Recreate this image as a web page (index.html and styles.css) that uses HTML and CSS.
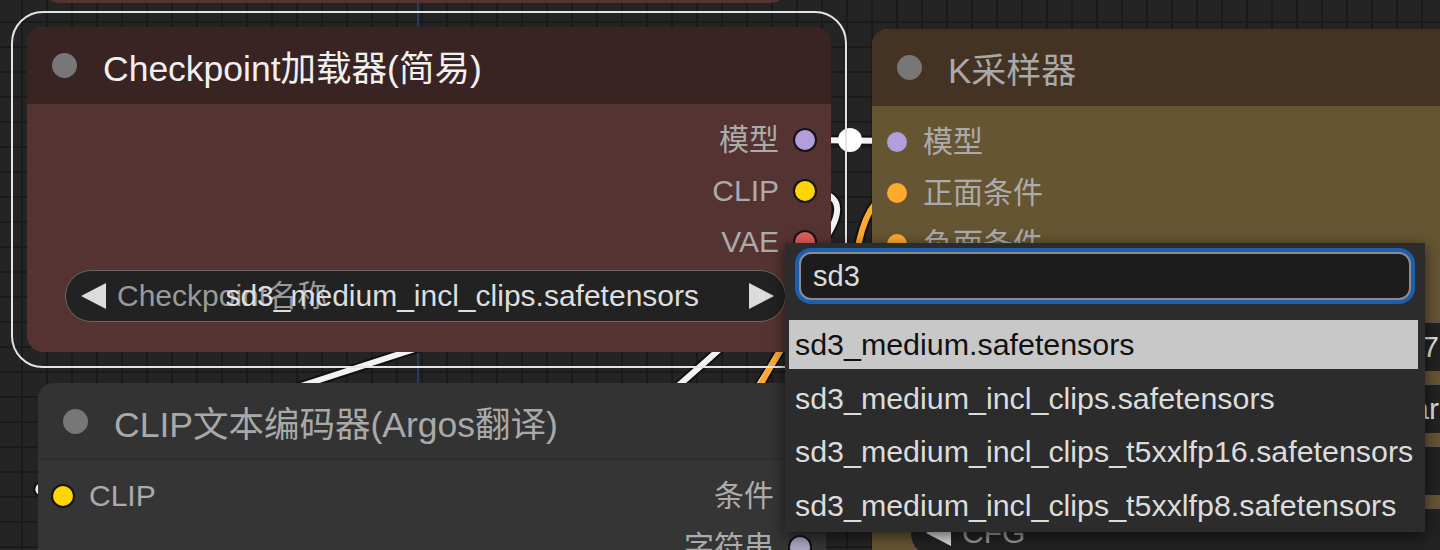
FILE: index.html
```html
<!DOCTYPE html>
<html lang="zh-CN">
<head>
    <meta charset="UTF-8">
    <title>ComfyUI - Checkpoint加载器</title>
    <link rel="stylesheet" href="styles.css">
</head>
<body>
    <!-- links are drawn under the nodes -->
    <svg class="links" width="1440" height="550" viewBox="0 0 1440 550">
        <line class="group-edge" x1="418" y1="0" x2="418" y2="550"/>
        <g class="wire-edge">
            <path d="M805 191 C1005 191 -138 495 62 495"/>
            <path d="M805 191 C1020 191 80 800 280 800"/>
            <path d="M805 242 C905 242 600 520 700 640"/>
            <path d="M700 560 C720 470 770 300 897 243"/>
            <path d="M800 497 C880 497 817 193 897 193"/>
            <path d="M805 140 L897 141"/>
        </g>
        <g class="wire wire-clip">
            <path d="M805 191 C1005 191 -138 495 62 495"/>
            <path d="M805 191 C1020 191 80 800 280 800"/>
            <path d="M805 242 C905 242 600 520 700 640"/>
        </g>
        <g class="wire wire-cond">
            <path d="M700 560 C720 470 770 300 897 243"/>
            <path d="M800 497 C880 497 817 193 897 193"/>
        </g>
        <g class="wire wire-model">
            <path d="M805 140 L897 141"/>
        </g>
        <circle class="link-knob" cx="850" cy="140" r="12"/>
    </svg>

    <div class="node node-ghost"></div>

    <div class="node node-ckpt selected">
        <div class="node-title"><span class="title-dot"></span><span>Checkpoint加载器(简易)</span></div>
        <div class="node-body">
            <div class="slot-row"><div class="slot out"><span>模型</span><i class="slot-dot model linked"></i></div></div>
            <div class="slot-row"><div class="slot out"><span>CLIP</span><i class="slot-dot clip linked"></i></div></div>
            <div class="slot-row"><div class="slot out"><span>VAE</span><i class="slot-dot vae linked"></i></div></div>
            <div class="combo">
                <svg class="arrow" viewBox="0 0 25 26"><path d="M25 0 V26 L0 13 Z"/></svg>
                <div class="combo-text">
                    <span class="combo-label">Checkpoint名称</span>
                    <span class="combo-value">sd3_medium_incl_clips.safetensors</span>
                </div>
                <svg class="arrow" viewBox="0 0 25 26"><path d="M0 0 V26 L25 13 Z"/></svg>
            </div>
        </div>
    </div>

    <div class="node node-ksampler">
        <div class="node-title"><span class="title-dot"></span><span>K采样器</span></div>
        <div class="node-body">
            <div class="slot-row"><div class="slot in"><i class="slot-dot model"></i><span>模型</span></div></div>
            <div class="slot-row"><div class="slot in"><i class="slot-dot cond"></i><span>正面条件</span></div></div>
            <div class="slot-row"><div class="slot in"><i class="slot-dot cond"></i><span>负面条件</span></div></div>
            <div class="slot-row"><div class="slot in"><i class="slot-dot latent"></i><span>Latent</span></div></div>
            <div class="widget-stack">
                <div class="combo">
                    <svg class="arrow" viewBox="0 0 25 26"><path d="M25 0 V26 L0 13 Z"/></svg>
                    <div class="combo-text"><span class="combo-label">随机种</span><span class="combo-value">7518</span></div>
                    <svg class="arrow" viewBox="0 0 25 26"><path d="M0 0 V26 L25 13 Z"/></svg>
                </div>
                <div class="combo">
                    <svg class="arrow" viewBox="0 0 25 26"><path d="M25 0 V26 L0 13 Z"/></svg>
                    <div class="combo-text"><span class="combo-label">运行后操作</span><span class="combo-value">karras&nbsp;</span></div>
                    <svg class="arrow" viewBox="0 0 25 26"><path d="M0 0 V26 L25 13 Z"/></svg>
                </div>
                <div class="combo">
                    <svg class="arrow" viewBox="0 0 25 26"><path d="M25 0 V26 L0 13 Z"/></svg>
                    <div class="combo-text"><span class="combo-label">步数</span><span class="combo-value">20</span></div>
                    <svg class="arrow" viewBox="0 0 25 26"><path d="M0 0 V26 L25 13 Z"/></svg>
                </div>
                <div class="combo">
                    <svg class="arrow" viewBox="0 0 25 26"><path d="M25 0 V26 L0 13 Z"/></svg>
                    <div class="combo-text"><span class="combo-label">CFG</span><span class="combo-value">8.0</span></div>
                    <svg class="arrow" viewBox="0 0 25 26"><path d="M0 0 V26 L25 13 Z"/></svg>
                </div>
            </div>
        </div>
    </div>

    <div class="node node-clip">
        <div class="node-title"><span class="title-dot"></span><span>CLIP文本编码器(Argos翻译)</span></div>
        <div class="node-body">
            <div class="slot-row">
                <div class="slot in"><i class="slot-dot clip linked"></i><span>CLIP</span></div>
                <div class="slot out"><span>条件</span><i class="slot-dot cond linked"></i></div>
            </div>
            <div class="slot-row">
                <div class="slot out"><span>字符串</span><i class="slot-dot string linked"></i></div>
            </div>
        </div>
    </div>

    <div class="menu">
        <div class="menu-filter">sd3</div>
        <div class="menu-item active">sd3_medium.safetensors</div>
        <div class="menu-item">sd3_medium_incl_clips.safetensors</div>
        <div class="menu-item">sd3_medium_incl_clips_t5xxlfp16.safetensors</div>
        <div class="menu-item">sd3_medium_incl_clips_t5xxlfp8.safetensors</div>
    </div>
</body>
</html>
```

FILE: styles.css
```css
body {
    margin: 0;
    width: 1440px;
    height: 550px;
    overflow: hidden;
    position: relative;
    font-family: "Liberation Sans", "Noto Sans CJK SC", sans-serif;
    background-color: #242424;
    background-image:
        linear-gradient(to right, #1a1a1a 2px, transparent 2px),
        linear-gradient(to bottom, #1a1a1a 2px, transparent 2px);
    background-size: 25px 25px;
    background-position: -4px -4px;
}

/* links */
.links {
    position: absolute;
    left: 0;
    top: 0;
}
.group-edge {
    stroke: #2a3a66;
    stroke-width: 2;
}
.wire-edge path {
    fill: none;
    stroke: #111;
    stroke-width: 10;
}
.wire path {
    fill: none;
    stroke-width: 6;
}
.wire-clip path, .wire-model path {
    stroke: #f2f2f2;
}
.wire-cond path {
    stroke: #ffa931;
}
.link-knob {
    fill: #fff;
}

/* nodes */
.node {
    position: absolute;
    border-radius: 16px;
    overflow: hidden;
}
.node-ghost {
    left: 43px;
    top: -100px;
    width: 744px;
    height: 103px;
    background: #553333;
}
.node-ckpt {
    left: 27px;
    top: 27px;
    width: 804px;
    height: 325px;
    background: #553333;
    overflow: visible;
}
.node-ckpt .node-title {
    background: #392323;
    border-radius: 16px 16px 0 0;
    font-size: 35.5px;
}
.node-ksampler {
    left: 872px;
    top: 29px;
    width: 749px;
    height: 600px;
    background: #665533;
}
.node-ksampler .node-title {
    background: #443322;
}
.node-clip {
    left: 38px;
    top: 383px;
    width: 788px;
    height: 300px;
    background: #353535;
}
.node-clip .node-title {
    background: #333333;
    border-bottom: 1px solid #2c2c2c;
    height: 76px;
    font-size: 35.5px;
}
.selected {
    outline: 2px solid #e4e4e4;
    outline-offset: 14px;
}

.node-title {
    height: 77px;
    display: flex;
    align-items: center;
    gap: 26px;
    padding-left: 25px;
    font-size: 35px;
    color: #a9a9a9;
    white-space: nowrap;
}
.selected .node-title {
    color: #f0f0f0;
}
.title-dot {
    width: 25px;
    height: 25px;
    border-radius: 50%;
    background: #777;
    flex: none;
}

.node-body {
    padding: 10px 16px 0 15px;
}
.slot-row {
    height: 51px;
    display: flex;
    align-items: center;
}
.slot {
    display: flex;
    align-items: center;
    gap: 16px;
    font-size: 30px;
    line-height: 34px;
    color: #ababab;
    white-space: nowrap;
}
.slot.out {
    margin-left: auto;
}
.slot-dot {
    width: 20px;
    height: 20px;
    border-radius: 50%;
    flex: none;
}
.slot-dot.linked {
    box-shadow: 0 0 0 2px #141414;
}
.slot-dot.model { background: #b39ddb; }
.slot-dot.clip { background: #ffd500; }
.slot-dot.vae { background: #e05c5c; }
.slot-dot.cond { background: #ffa931; }
.slot-dot.latent { background: #ff9cf9; }
.slot-dot.string { background: #a9a7c2; }

/* combo widgets */
.combo {
    height: 52px;
    box-sizing: border-box;
    margin: 3px 29px 0 23px;
    padding: 0 11px 0 15px;
    border: 1.5px solid #666;
    border-radius: 26px;
    background: #222;
    display: grid;
    grid-template-columns: 25px minmax(0, 1fr) 25px;
    align-items: center;
    font-size: 30px;
    line-height: 34px;
}
.arrow {
    width: 25px;
    height: 26px;
    fill: #dcdcdc;
}
.combo-text {
    display: grid;
    margin: 0 50px 0 11px;
}
.combo-text span {
    grid-area: 1 / 1;
    white-space: nowrap;
}
.combo-label {
    color: #9a9a9a;
    justify-self: start;
}
.combo-value {
    color: #dedede;
    justify-self: end;
}
.widget-stack {
    display: flex;
    flex-direction: column;
    gap: 12px;
    margin-top: 2px;
}
.widget-stack .combo {
    height: 50px;
    margin-top: 0;
    border-color: #555;
}

/* filtered combo menu */
.menu {
    position: absolute;
    left: 785px;
    top: 243px;
    width: 640px;
    height: 289px;
    box-sizing: border-box;
    overflow: hidden;
    padding: 9px 7px 0 4px;
    background: #2c2c2c;
    box-shadow: 0 4px 14px rgba(0, 0, 0, 0.6);
}
.menu-filter {
    height: 48px;
    box-sizing: border-box;
    margin: 0 7px 20px 10px;
    padding-left: 12px;
    border: 2px solid #8c8c8c;
    border-radius: 12px;
    background: #1c1c1c;
    box-shadow: 0 0 0 4px #1c5fae;
    display: flex;
    align-items: center;
    font-size: 29px;
    color: #dcdcdc;
}
.menu-item {
    height: 49px;
    margin-bottom: 4.5px;
    padding-left: 6px;
    display: flex;
    align-items: center;
    font-size: 30.4px;
    color: #dcdcdc;
    white-space: nowrap;
}
.menu-item.active {
    background: #c8c8c8;
    color: #111;
}
```
